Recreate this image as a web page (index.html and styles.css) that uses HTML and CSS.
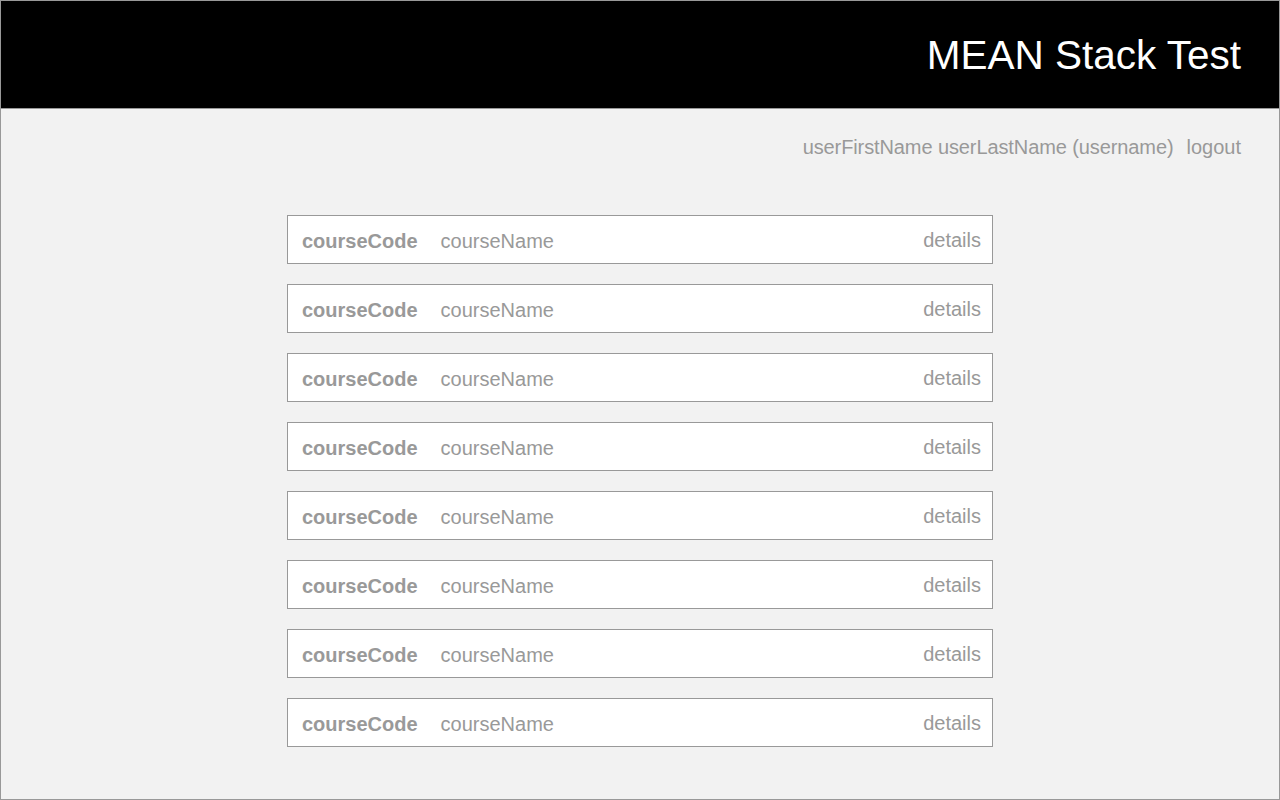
FILE: index.html
```html
<!DOCTYPE html>
<html>
<head>
<meta charset="utf-8">
<link rel="stylesheet" href="styles.css">
</head>
<body>
<div class="frame">
  <header class="topbar">
    <h1 class="title">MEAN Stack Test</h1>
  </header>
  <div class="userbar">
    <span class="user">userFirstName userLastName (username)</span>
    <a class="logout">logout</a>
  </div>
  <ul class="courses">
    <li class="course"><span class="code">courseCode</span><span class="name">courseName</span><a class="details">details</a></li>
    <li class="course"><span class="code">courseCode</span><span class="name">courseName</span><a class="details">details</a></li>
    <li class="course"><span class="code">courseCode</span><span class="name">courseName</span><a class="details">details</a></li>
    <li class="course"><span class="code">courseCode</span><span class="name">courseName</span><a class="details">details</a></li>
    <li class="course"><span class="code">courseCode</span><span class="name">courseName</span><a class="details">details</a></li>
    <li class="course"><span class="code">courseCode</span><span class="name">courseName</span><a class="details">details</a></li>
    <li class="course"><span class="code">courseCode</span><span class="name">courseName</span><a class="details">details</a></li>
    <li class="course"><span class="code">courseCode</span><span class="name">courseName</span><a class="details">details</a></li>
  </ul>
</div>
</body>
</html>
```
FILE: styles.css
```css
html, body {
  margin: 0;
  padding: 0;
}
body {
  font-family: "Liberation Sans", Arial, Helvetica, sans-serif;
  background: #f2f2f2;
}
.frame {
  box-sizing: border-box;
  width: 1280px;
  height: 800px;
  border: 1px solid #999;
  background: #f2f2f2;
  overflow: hidden;
}
.topbar {
  height: 107px;
  background: #000;
  border-bottom: 1px solid #999;
  display: flex;
  align-items: center;
  justify-content: flex-end;
  padding-right: 38px;
}
.title {
  margin: 0;
  font-size: 40.5px;
  font-weight: normal;
  color: #fff;
  line-height: 46px;
}
.userbar {
  display: flex;
  justify-content: flex-end;
  padding: 26px 38px 0 0;
  font-size: 20px;
  line-height: 24px;
  color: #999;
}
.user {
  letter-spacing: -0.1px;
}
.logout {
  margin-left: 13px;
  color: #999;
}
.courses {
  list-style: none;
  margin: 56px auto 0;
  padding: 0;
  width: 706px;
  display: flex;
  flex-direction: column;
  gap: 20px;
}
.course {
  box-sizing: border-box;
  height: 49px;
  background: #fff;
  border: 1px solid #999;
  display: flex;
  align-items: center;
  padding: 4px 11px 0 14px;
  font-size: 20px;
  line-height: 23px;
  color: #999;
}
.code {
  font-weight: bold;
  margin-right: 23px;
}
.name {
  flex: 1;
}
.details {
  color: #999;
  padding-bottom: 3px;
}
```
